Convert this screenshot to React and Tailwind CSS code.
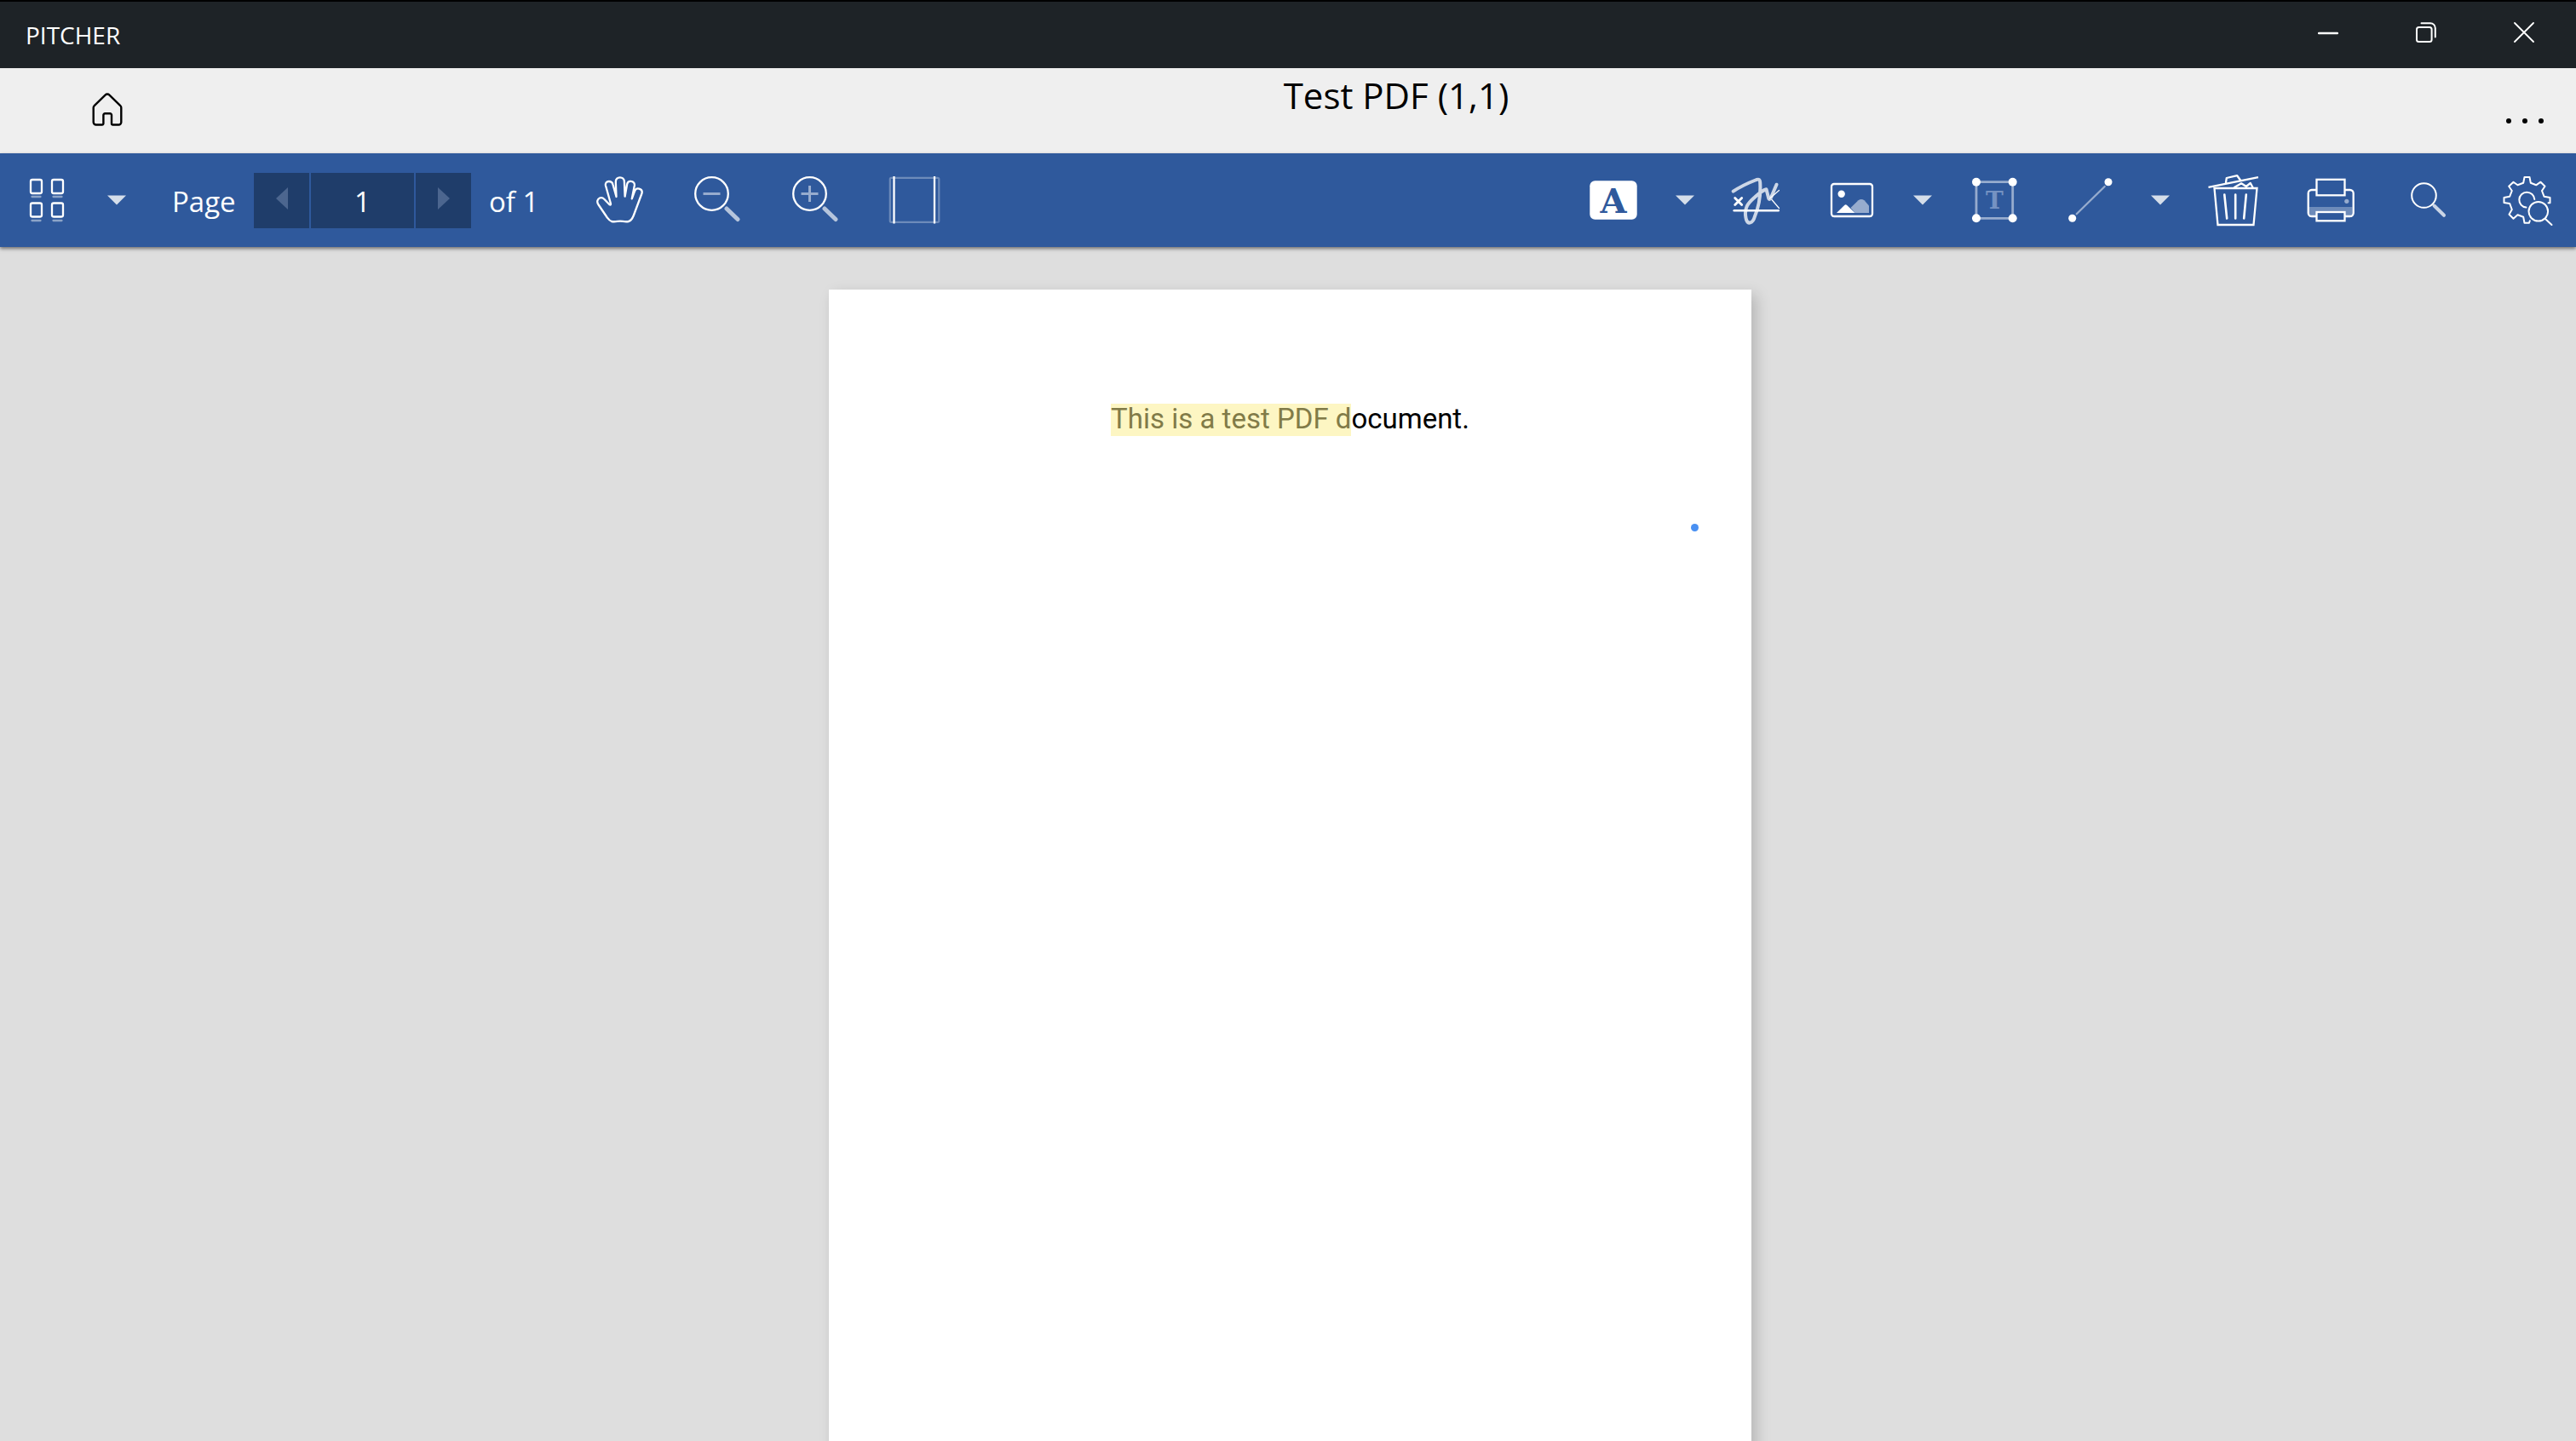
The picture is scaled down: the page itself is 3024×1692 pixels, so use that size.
import React from "react";

function Icon({ children }) {
  return (
    <svg
      viewBox="0 0 60 60"
      className="size-[60px] shrink-0 overflow-visible"
      fill="none"
      stroke="currentColor"
      strokeWidth="2.3"
      strokeLinecap="round"
      strokeLinejoin="round"
      aria-hidden="true"
    >
      {children}
    </svg>
  );
}

function Tool({ label, children }) {
  return (
    <button type="button" aria-label={label} className="flex h-full w-28 items-center justify-center">
      {children}
    </button>
  );
}

function WideTool({ label, children }) {
  return (
    <button type="button" aria-label={label} className="flex h-full w-[115px] items-center justify-center pr-px">
      {children}
    </button>
  );
}

function Caret({ label }) {
  return (
    <button type="button" aria-label={label} className="flex h-full w-[55px] items-center justify-center pr-0.5">
      <svg viewBox="0 0 24 12" className="h-3 w-6" fill="#d5deea" aria-hidden="true">
        <path d="M1 0.500h22L12 11.500z" />
      </svg>
    </button>
  );
}

function TitleBar() {
  return (
    <header className="flex h-20 shrink-0 items-center justify-between border-t-2 border-black bg-[#1e2327] pl-7 text-white">
      <span className="px-0.5 text-[28px] leading-10">PITCHER</span>
      <div className="flex h-full pr-1 pb-1.5">
        <button type="button" aria-label="Minimize" className="flex w-[115px] items-center justify-center">
          <svg viewBox="0 0 24 24" className="size-6" stroke="currentColor" strokeWidth="2.4" strokeLinecap="round">
            <path d="M1 13h22" />
          </svg>
        </button>
        <button type="button" aria-label="Restore" className="flex w-[115px] items-center justify-center">
          <svg viewBox="0 0 24 24" className="size-6" fill="none" stroke="currentColor" strokeWidth="2" strokeLinecap="round">
            <rect x="1" y="6" width="17.6" height="17" rx="2.5" />
            <path d="M6.5 1.2H17a5.8 5.8 0 0 1 5.8 5.8v10.5" />
          </svg>
        </button>
        <button type="button" aria-label="Close" className="flex w-[115px] items-center justify-center">
          <svg viewBox="0 0 24 24" className="size-6" stroke="currentColor" strokeWidth="1.8" strokeLinecap="round">
            <path d="M1 1l22 22M23 1L1 23" />
          </svg>
        </button>
      </div>
    </header>
  );
}

function DocumentBar() {
  return (
    <div className="flex h-[100px] shrink-0 bg-[#efefef] text-black">
      <div className="flex w-[374px] items-center pb-0.5 pl-[106px]">
        <button type="button" aria-label="Home">
          <svg viewBox="0 0 40 40" className="size-10" fill="none" stroke="currentColor" strokeWidth="2.4" strokeLinejoin="round">
            <path d="M17.8 2.4a3 3 0 0 1 4.400 0L35.300 15.200a3 3 0 0 1 1 2.300V34.500a3 3 0 0 1-3 3H26.500a1.500 1.500 0 0 1-1.500-1.500V26a1.800 1.800 0 0 0-1.800-1.800H17.200a1.800 1.800 0 0 0-1.800 1.800V36a1.500 1.500 0 0 1-1.500 1.500H6.700a3 3 0 0 1-3-3V17.500a3 3 0 0 1 1-2.300z" />
          </svg>
        </button>
      </div>
      <h1 className="flex-1 pt-1 text-center text-[42px] leading-14">Test PDF (1,1)</h1>
      <div className="flex w-[120px] items-end justify-center pb-[35px]">
        <button type="button" aria-label="More" className="flex gap-[13px]">
          <span className="size-1.5 rounded-full bg-black" />
          <span className="size-1.5 rounded-full bg-black" />
          <span className="size-1.5 rounded-full bg-black" />
        </button>
      </div>
    </div>
  );
}

function Toolbar() {
  return (
    <nav className="relative z-10 flex h-[110px] shrink-0 items-center justify-between bg-[#2f599c] text-white shadow-[0_2px_4px_rgba(0,0,0,0.5)]">
      <div className="flex h-full items-center">
        <button type="button" aria-label="Thumbnails" className="flex h-full w-[110px] items-center justify-center">
          <Icon>
            <rect x="11" y="6" width="13" height="16" rx="2" />
            <rect x="36" y="6" width="13" height="16" rx="2" />
            <rect x="11" y="33.500" width="13" height="16" rx="2" />
            <rect x="36" y="33.500" width="13" height="16" rx="2" />
            <path d="M12.500 26h10M37.500 26h10M12.500 54h10M37.500 54h10" opacity=".45" />
          </Icon>
        </button>
        <Caret label="View options" />
        <label htmlFor="page-number" className="w-[133px] pt-1 pl-[37px] text-[33px] leading-10">
          Page
        </label>
        <div className="flex h-[65px] gap-0.5">
          <button type="button" aria-label="Previous page" className="flex w-[65px] items-center justify-center bg-[#1f3d6a] pb-1">
            <svg viewBox="0 0 14 28" className="h-7 w-3.5" fill="#4c668f">
              <path d="M14 1v26L0 14z" />
            </svg>
          </button>
          <input
            id="page-number"
            type="text"
            defaultValue="1"
            className="w-[121px] bg-[#1f3d6a] pt-1 text-center text-[33px] leading-10"
          />
          <button type="button" aria-label="Next page" className="flex w-[65px] items-center justify-center bg-[#1f3d6a] pb-1">
            <svg viewBox="0 0 14 28" className="h-7 w-3.5" fill="#4c668f">
              <path d="M0 1v26l14-13z" />
            </svg>
          </button>
        </div>
        <span className="w-[117px] pt-1 pl-[21px] text-[33px] leading-10">of 1</span>
        <WideTool label="Pan">
          <Icon>
            <path d="M21 55C18 54 17 52 15.500 50L5.300 35C3.500 32 4 29 7 27.500C9.500 26.500 11 27.500 12.500 29L18.500 35.300C20 36 20.200 35 19.800 33.500L14 13C13.300 10 15 8 17.800 8C20.500 8 22 9.500 22.500 11.700L26.500 26L25.800 8.500C25.800 5 28 3.300 30.800 3.300C33.500 3.300 35.900 5 35.900 8.500L36.600 25.700L39.200 11C39.800 8.500 41.500 7.500 44 7.900C47 8.300 48.200 10.500 47.800 13L44.800 28.300L48 19.500C49 17 51 16 53.300 16.700C56 17.500 57.200 19.500 56.500 22L46.800 48C45.500 51.500 44 54 41 55C37 55.800 34 54.700 31 54.700C28 54.700 25 55.800 21 55Z" />
          </Icon>
        </WideTool>
        <WideTool label="Zoom out">
          <Icon>
            <circle cx="23.500" cy="22.500" r="19.300" />
            <path d="M13.500 22.500h20" strokeWidth="3" strokeLinecap="butt" opacity=".5" />
            <path d="M41 40l13 12.500" strokeWidth="5" opacity=".65" />
          </Icon>
        </WideTool>
        <WideTool label="Zoom in">
          <Icon>
            <circle cx="23.500" cy="22.500" r="19.300" />
            <path d="M13.500 21h8.500v-8h3v8h8.500v3h-8.500v8h-3v-8h-8.500z" fill="currentColor" stroke="none" opacity=".5" />
            <path d="M41 40l13 12.500" strokeWidth="5" opacity=".65" />
          </Icon>
        </WideTool>
        <WideTool label="Fit page">
          <Icon>
            <rect x="2.800" y="3.800" width="57.500" height="52" rx="1.500" strokeWidth="2.200" opacity=".3" />
            <path d="M7.500 2v55.500M55 2v55.500" strokeLinecap="butt" />
          </Icon>
        </WideTool>
      </div>

      <div className="flex h-full items-center">
        <Tool label="Text markup">
          <Icon>
            <rect x="1.300" y="7.300" width="55.400" height="45.400" rx="6" fill="currentColor" stroke="none" />
            <text x="29" y="45" textAnchor="middle" fill="#2f599c" stroke="none" fontSize="40" fontWeight="700" fontFamily="DejaVu Serif, serif">
              A
            </text>
          </Icon>
        </Tool>
        <Caret label="Text markup options" />
        <Tool label="Signature">
          <Icon>
            <path d="M2.700 19.700C11 14 21 9.500 30 6C33 5 34 6 34.200 9C35 22 33 37 28 49C25.500 58 20 58.500 18 53C14 38 22 32 28 26.500C33 22 37 18.500 41.500 17.300L44 27C44.500 29.500 46 29.500 47 27L53.500 11.700" strokeWidth="4" opacity=".76" />
            <path d="M45.500 28l11-9.500M48 29.500l8.500 10" strokeWidth="1.200" />
            <path d="M3.700 42.300h52" strokeWidth="2.500" />
            <path d="M4.700 27.500l8 8M12.700 27.500l-8 8" strokeWidth="2.800" />
          </Icon>
        </Tool>
        <Tool label="Image">
          <Icon>
            <rect x="6" y="11" width="48" height="38" rx="3" />
            <circle cx="17.700" cy="22.700" r="4.200" fill="currentColor" stroke="none" />
            <path d="M28.500 39L37.500 30.300Q41 27.500 44.500 30.300L50 36.500V45H33.500z" fill="currentColor" stroke="none" opacity=".5" />
            <path d="M12 45l9.200-9q1.500-1.300 3 0l9.300 9z" fill="currentColor" stroke="none" />
          </Icon>
        </Tool>
        <Caret label="Image options" />
        <Tool label="Text box">
          <Icon>
            <rect x="9" y="8.700" width="42.700" height="42.600" strokeWidth="2.800" opacity=".5" />
            <g fill="currentColor" stroke="none">
              <circle cx="9" cy="8.700" r="5" />
              <circle cx="51.700" cy="8.700" r="5" />
              <circle cx="9" cy="51.300" r="5" />
              <circle cx="51.700" cy="51.300" r="5" />
            </g>
            <text x="30.400" y="40" textAnchor="middle" fill="#7592c2" stroke="none" fontSize="28" fontWeight="700" fontFamily="DejaVu Serif, serif">
              T
            </text>
          </Icon>
        </Tool>
        <Tool label="Line">
          <Icon>
            <path d="M14.700 46.300l33-32.300" opacity=".5" />
            <circle cx="9.700" cy="51.300" r="4.500" fill="currentColor" stroke="none" />
            <circle cx="52" cy="8.700" r="4.500" fill="currentColor" stroke="none" />
          </Icon>
        </Tool>
        <Caret label="Shape options" />
        <WideTool label="Delete">
          <Icon>
            <path d="M1.500 14.800L60 3.200M21.800 10.500l1-6.500 12.400-2.800 4 5.500" strokeLinecap="butt" />
            <path d="M8.500 16h50l-4 43h-42z" strokeLinejoin="miter" />
            <path d="M20.300 23.500l2.900 28M33.200 23.500v28M45.800 23.500l-2.600 28" strokeWidth="2.600" />
            <path d="M32 15l8.200-4.700 5.600 3.700 5-4 2.700 5" />
          </Icon>
        </WideTool>
        <WideTool label="Print">
          <Icon>
            <path d="M4.500 38h51v9l-2 1.500h-47l-2-1.500z" fill="currentColor" stroke="none" opacity=".3" />
            <rect x="3.700" y="18" width="53" height="31" rx="4" />
            <rect x="13.500" y="5.800" width="33" height="18.500" fill="#2f599c" strokeLinejoin="miter" />
            <rect x="13.500" y="44" width="33" height="10.300" fill="#2f599c" strokeLinejoin="miter" />
            <circle cx="48.800" cy="31.300" r="2.600" fill="currentColor" stroke="none" opacity=".5" />
          </Icon>
        </WideTool>
        <WideTool label="Search">
          <Icon>
            <circle cx="24.500" cy="24.500" r="14.300" strokeWidth="2" />
            <path d="M36.500 36.500l11.500 11.300" strokeWidth="4" opacity=".75" />
          </Icon>
        </WideTool>
        <WideTool label="Preferences">
          <Icon>
            <g strokeWidth="2">
              <path d="M33.800 54.300L33 56.700H27.500L26.200 49.700L19.500 47.300L14.500 51.700L9.500 46.700L12.800 41L10.200 34L3.500 33V27L10.200 25.700L12.800 19L9.200 13.700L14.500 8.700L19.500 12.300L26.200 9.700L27.500 3H33.500L34.800 9.700L41.200 12.300L46.500 8.700L51.500 13.700L48 19L50.500 25.700L57.500 27V33.300H55.500" />
              <path d="M39.300 29A9 9 0 1 0 29.500 38.600" />
              <circle cx="43.800" cy="43.300" r="11.300" />
              <path d="M52 52l7.500 7" />
            </g>
          </Icon>
        </WideTool>
      </div>
    </nav>
  );
}

export default function App() {
  return (
    <div className="flex h-screen flex-col overflow-hidden bg-[#dedede] font-['Open_Sans',sans-serif]">
      <TitleBar />
      <DocumentBar />
      <Toolbar />
      <main className="flex min-h-0 flex-1 items-start justify-center overflow-hidden pt-[50px] pl-[5px]">
        <article className="relative flex aspect-[17/22] w-[1083px] shrink-0 flex-col items-center bg-white pt-[134px] shadow-[6px_6px_16px_rgba(0,0,0,0.18)]">
          <p className="font-['Roboto',sans-serif] text-[33px] leading-9 text-black">
            <mark className="inline-block bg-[#fdf6c3] pb-0.5 text-[#817b48]">This is a test PDF d</mark>ocument.
          </p>
          <span className="absolute top-[275px] right-[62px] size-[9px] rounded-full bg-[#4990f2]" />
        </article>
      </main>
    </div>
  );
}
